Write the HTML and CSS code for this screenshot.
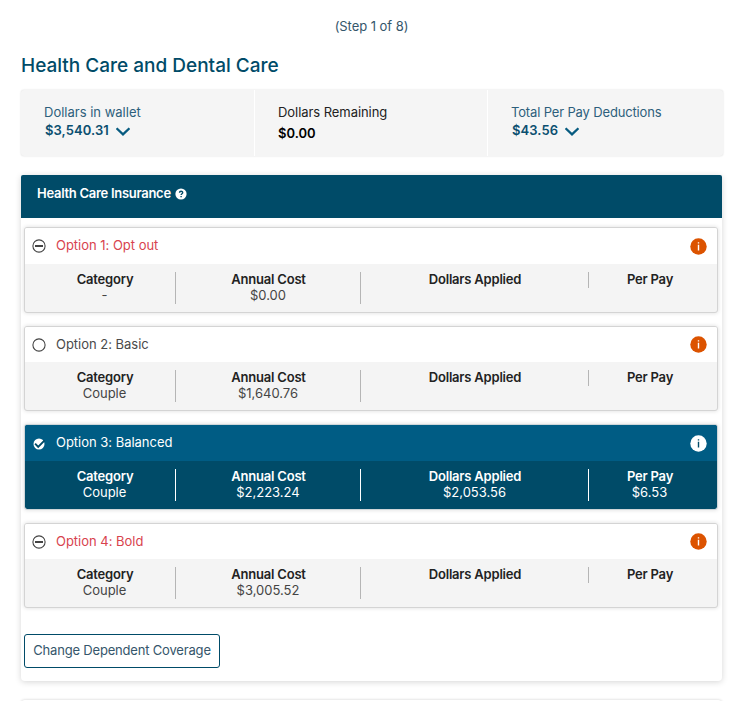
FILE: index.html
```html
<!DOCTYPE html>
<html lang="en">
<head>
<meta charset="utf-8">
<title>Health Care and Dental Care</title>
<link rel="stylesheet" href="styles.css">
</head>
<body>
<svg class="defs" width="0" height="0">
  <symbol id="chevron" viewBox="0 0 14 9"><path d="M.6 1.2 7 7.4 13.4 1.2" fill="none" stroke="currentColor" stroke-width="2.2"/></symbol>
  <symbol id="info" viewBox="0 0 17 17"><circle cx="8.5" cy="8.5" r="8.2" fill="currentColor"/><path class="mark" d="M8.5 6.8V12.6M8.5 4.2V5.6"/></symbol>
  <symbol id="minus" viewBox="0 0 14 14"><circle cx="7" cy="7" r="6.1" fill="none" stroke="#444" stroke-width="1.1"/><path d="M3 7h8" stroke="#444" stroke-width="1.8"/></symbol>
  <symbol id="empty" viewBox="0 0 14 14"><circle cx="7" cy="7" r="6.1" fill="none" stroke="#444" stroke-width="1.1"/></symbol>
  <symbol id="checked" viewBox="0 0 14 14"><circle cx="7" cy="7" r="5.5" fill="#fff"/><path d="M3.1 6.6 6.2 9.8 12.6 3.4" fill="none" stroke="#004b68" stroke-width="1.9"/></symbol>
</svg>
<p class="step">(Step 1 of 8)</p>
<h1 class="title">Health Care and Dental Care</h1>

<section class="summary">
  <div class="stat">
    <div class="stat-label">Dollars in wallet</div>
    <div class="stat-value">$3,540.31<svg class="chevron"><use href="#chevron"/></svg></div>
  </div>
  <div class="stat plain">
    <div class="stat-label remaining">Dollars Remaining</div>
    <div class="stat-value">$0.00</div>
  </div>
  <div class="stat">
    <div class="stat-label deductions">Total Per Pay Deductions</div>
    <div class="stat-value">$43.56<svg class="chevron"><use href="#chevron"/></svg></div>
  </div>
</section>

<section class="panel">
  <h2 class="panel-head"><span>Health Care Insurance</span><svg class="help" viewBox="0 0 12 12"><circle cx="6" cy="6" r="5.6" fill="#fff"/><path d="M4.5 4.8C4.5 2.8 7.7 2.8 7.7 4.7 7.7 5.7 6.1 5.8 6.1 7M6.1 8v1.3" fill="none" stroke="#004b68" stroke-width="1.4"/></svg></h2>
  <div class="options">
    <article class="option unavailable">
      <header class="option-head"><svg class="radio"><use href="#minus"/></svg><span class="name">Option 1: Opt out</span><svg class="info"><use href="#info"/></svg></header>
      <div class="cells">
        <div class="cell"><b>Category</b><span>-</span></div>
        <div class="cell"><b>Annual Cost</b><span>$0.00</span></div>
        <div class="cell"><b>Dollars Applied</b></div>
        <div class="cell"><b>Per Pay</b></div>
      </div>
    </article>
    <article class="option">
      <header class="option-head"><svg class="radio"><use href="#empty"/></svg><span class="name">Option 2: Basic</span><svg class="info"><use href="#info"/></svg></header>
      <div class="cells">
        <div class="cell"><b>Category</b><span>Couple</span></div>
        <div class="cell"><b>Annual Cost</b><span>$1,640.76</span></div>
        <div class="cell"><b>Dollars Applied</b></div>
        <div class="cell"><b>Per Pay</b></div>
      </div>
    </article>
    <article class="option selected">
      <header class="option-head"><svg class="radio"><use href="#checked"/></svg><span class="name">Option 3: Balanced</span><svg class="info"><use href="#info"/></svg></header>
      <div class="cells">
        <div class="cell"><b>Category</b><span>Couple</span></div>
        <div class="cell"><b>Annual Cost</b><span>$2,223.24</span></div>
        <div class="cell"><b>Dollars Applied</b><span>$2,053.56</span></div>
        <div class="cell"><b>Per Pay</b><span>$6.53</span></div>
      </div>
    </article>
    <article class="option unavailable">
      <header class="option-head"><svg class="radio"><use href="#minus"/></svg><span class="name">Option 4: Bold</span><svg class="info"><use href="#info"/></svg></header>
      <div class="cells">
        <div class="cell"><b>Category</b><span>Couple</span></div>
        <div class="cell"><b>Annual Cost</b><span>$3,005.52</span></div>
        <div class="cell"><b>Dollars Applied</b></div>
        <div class="cell"><b>Per Pay</b></div>
      </div>
    </article>
  </div>
  <button class="change" type="button">Change Dependent Coverage</button>
</section>
<section class="panel next"></section>
</body>
</html>
```
FILE: styles.css
```css
* { box-sizing: border-box; }
html { overflow: hidden; }
body {
  margin: 0;
  height: 701px;
  overflow: hidden;
  background: #fff;
  font-family: Inter, "Liberation Sans", sans-serif;
  font-size: 13px;
  line-height: 16px;
  color: #444;
}
.defs { display: block; }
.step {
  margin: 18px 0 0;
  padding-left: 9px;
  text-align: center;
  color: #35566b;
  letter-spacing: -0.05px;
}
.title {
  margin: 20px 0 0 21px;
  font-size: 19px;
  line-height: 24px;
  font-weight: 500;
  letter-spacing: 0;
  color: #004b68;
}
.summary {
  display: grid;
  grid-template-columns: 234px 233px 1fr;
  width: 702px;
  height: 66px;
  margin: 12px 0 0 21px;
  background: #f5f5f5;
  border-radius: 3px;
  box-shadow: 0 0 2px rgba(0, 0, 0, .16);
}
.stat {
  padding: 14px 0 0 23px;
  border-right: 1px solid #fff;
  color: #2d5f7c;
}
.stat:last-child { border-right: 0; }
.remaining { letter-spacing: -0.06px; }
.deductions { letter-spacing: -0.15px; }
.stat-value {
  display: flex;
  align-items: center;
  gap: 7px;
  margin-top: 2px;
  padding-left: 1px;
  font-weight: 600;
  letter-spacing: 0.08px;
  color: #0b4f70;
}
.stat.plain { color: #222; }
.plain .stat-value { margin-top: 5px; padding-left: 0; color: #000; letter-spacing: 0; }
.chevron { width: 14px; height: 9px; margin-top: 3px; color: #075b80; }
.panel {
  width: 701px;
  height: 506px;
  margin: 19px 0 0 21px;
  border-radius: 4px;
  box-shadow: 0 1px 6px rgba(0, 0, 0, .17);
}
.panel.next { height: 40px; margin-top: 19px; box-shadow: 0 0 3px rgba(0, 0, 0, .2); }
.panel-head {
  display: flex;
  align-items: flex-start;
  gap: 4px;
  height: 43px;
  margin: 0;
  padding: 10px 16px 0;
  border-radius: 2px 2px 0 0;
  background: #004b68;
  color: #fff;
  font-size: 13px;
  line-height: 16px;
  font-weight: 600;
  letter-spacing: -0.28px;
}
.help { width: 12px; height: 12px; margin-top: 3px; }
.options {
  display: flex;
  flex-direction: column;
  gap: 13px;
  padding: 9px 4px 0 3px;
}
.option {
  height: 85.6px;
  border: 1px solid #d4d4d4;
  border-radius: 3px;
  background: #f4f4f4;
  box-shadow: 0 0 4px rgba(0, 0, 0, .14);
  overflow: hidden;
}
.option-head {
  display: flex;
  align-items: flex-start;
  height: 35.6px;
  padding: 9px 10px 0 8px;
  background: #fff;
  color: #4a4a4a;
}
.radio { width: 14px; height: 14px; margin: 2.4px 10px 0 -1px; }
.name { flex: 1; letter-spacing: -0.02px; }
.info { width: 17px; height: 17px; color: #dc5300; margin-top: .6px; }
.mark { fill: none; stroke: var(--mark, #fff); stroke-width: 1.4; }
.cells {
  display: grid;
  grid-template-columns: 142px 185px 228px 121px;
  align-items: start;
  padding: 8px 0 0 9px;
}
.cell {
  display: flex;
  flex-direction: column;
  text-align: center;
  border-right: 1px solid #b5b5b5;
}
.cell b,
.cell span {
  margin: -1px 0 1px;
}
.cell:last-child { border-right: 0; }
.cell b { padding-left: 1px; font-weight: 600; color: #222; letter-spacing: -0.2px; }
.unavailable .name { color: #d8434e; }
.selected { background: #004b68; color: #fff; border-color: #cfd6d9; background-clip: padding-box; }
.selected .option-head { background: #005c84; color: #fff; }
.selected .cell { border-color: #fff; }
.selected .cell b { color: #fff; }
.selected .info { color: #fff; --mark: #004b68; }
.change {
  display: block;
  width: 196px;
  height: 34px;
  margin: 26px 0 0 3px;
  padding: 0 0 2px;
  border: 1px solid #004b68;
  border-radius: 3px;
  background: #fff;
  font: inherit;
  letter-spacing: -0.18px;
  color: #35566b;
}
```
